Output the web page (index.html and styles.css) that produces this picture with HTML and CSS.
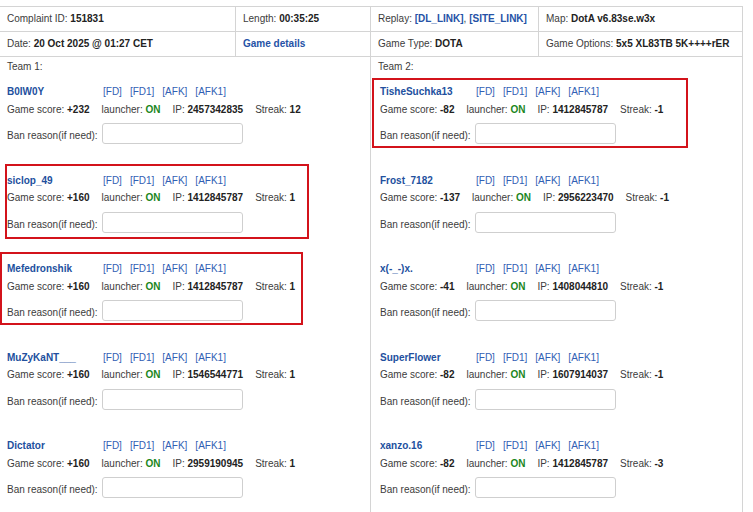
FILE: index.html
```html
<!DOCTYPE html>
<html lang="en">
<head>
    <meta charset="UTF-8">
    <title>Complaint 151831</title>
    <link rel="stylesheet" href="styles.css">
</head>
<body>
<div class="page">
    <table class="info">
        <colgroup>
            <col class="c1"><col class="c2"><col class="c3"><col class="c4">
        </colgroup>
        <tr>
            <td>Complaint ID: <b>151831</b></td>
            <td>Length: <b>00:35:25</b></td>
            <td>Replay: <a href="#" class="strong">[DL_LINK]</a>, <a href="#" class="strong">[SITE_LINK]</a></td>
            <td>Map: <b>DotA v6.83se.w3x</b></td>
        </tr>
        <tr>
            <td>Date: <b>20 Oct 2025 @ 01:27 CET</b></td>
            <td><a href="#" class="strong">Game details</a></td>
            <td>Game Type: <b>DOTA</b></td>
            <td>Game Options: <b>5x5 XL83TB 5K++++rER</b></td>
        </tr>
        <tr class="teams">
            <td colspan="2" class="team team-1">
                <div class="team-label">Team 1:</div>

                <div class="player">
                    <div class="name-line"><a href="#" class="name">B0IW0Y</a><span class="acts"><a href="#">[FD]</a><a href="#">[FD1]</a><a href="#">[AFK]</a><a href="#">[AFK1]</a></span></div>
                    <div class="stats"><span>Game score: <b>+232</b></span><span>launcher: <b class="on">ON</b></span><span>IP: <b>2457342835</b></span><span>Streak: <b>12</b></span></div>
                    <div class="ban"><label>Ban reason(if need):</label><input type="text"></div>
                </div>

                <div class="player">
                    <div class="name-line"><a href="#" class="name">siclop_49</a><span class="acts"><a href="#">[FD]</a><a href="#">[FD1]</a><a href="#">[AFK]</a><a href="#">[AFK1]</a></span></div>
                    <div class="stats"><span>Game score: <b>+160</b></span><span>launcher: <b class="on">ON</b></span><span>IP: <b>1412845787</b></span><span>Streak: <b>1</b></span></div>
                    <div class="ban"><label>Ban reason(if need):</label><input type="text"></div>
                </div>

                <div class="player">
                    <div class="name-line"><a href="#" class="name">Mefedronshik</a><span class="acts"><a href="#">[FD]</a><a href="#">[FD1]</a><a href="#">[AFK]</a><a href="#">[AFK1]</a></span></div>
                    <div class="stats"><span>Game score: <b>+160</b></span><span>launcher: <b class="on">ON</b></span><span>IP: <b>1412845787</b></span><span>Streak: <b>1</b></span></div>
                    <div class="ban"><label>Ban reason(if need):</label><input type="text"></div>
                </div>

                <div class="player">
                    <div class="name-line"><a href="#" class="name">MuZyKaNT___</a><span class="acts"><a href="#">[FD]</a><a href="#">[FD1]</a><a href="#">[AFK]</a><a href="#">[AFK1]</a></span></div>
                    <div class="stats"><span>Game score: <b>+160</b></span><span>launcher: <b class="on">ON</b></span><span>IP: <b>1546544771</b></span><span>Streak: <b>1</b></span></div>
                    <div class="ban"><label>Ban reason(if need):</label><input type="text"></div>
                </div>

                <div class="player">
                    <div class="name-line"><a href="#" class="name">Dictator</a><span class="acts"><a href="#">[FD]</a><a href="#">[FD1]</a><a href="#">[AFK]</a><a href="#">[AFK1]</a></span></div>
                    <div class="stats"><span>Game score: <b>+160</b></span><span>launcher: <b class="on">ON</b></span><span>IP: <b>2959190945</b></span><span>Streak: <b>1</b></span></div>
                    <div class="ban"><label>Ban reason(if need):</label><input type="text"></div>
                </div>
            </td>
            <td colspan="2" class="team team-2">
                <div class="team-label">Team 2:</div>

                <div class="player">
                    <div class="name-line"><a href="#" class="name">TisheSuchka13</a><span class="acts"><a href="#">[FD]</a><a href="#">[FD1]</a><a href="#">[AFK]</a><a href="#">[AFK1]</a></span></div>
                    <div class="stats"><span>Game score: <b>-82</b></span><span>launcher: <b class="on">ON</b></span><span>IP: <b>1412845787</b></span><span>Streak: <b>-1</b></span></div>
                    <div class="ban"><label>Ban reason(if need):</label><input type="text"></div>
                </div>

                <div class="player">
                    <div class="name-line"><a href="#" class="name">Frost_7182</a><span class="acts"><a href="#">[FD]</a><a href="#">[FD1]</a><a href="#">[AFK]</a><a href="#">[AFK1]</a></span></div>
                    <div class="stats"><span>Game score: <b>-137</b></span><span>launcher: <b class="on">ON</b></span><span>IP: <b>2956223470</b></span><span>Streak: <b>-1</b></span></div>
                    <div class="ban"><label>Ban reason(if need):</label><input type="text"></div>
                </div>

                <div class="player">
                    <div class="name-line"><a href="#" class="name">x(-_-)x.</a><span class="acts"><a href="#">[FD]</a><a href="#">[FD1]</a><a href="#">[AFK]</a><a href="#">[AFK1]</a></span></div>
                    <div class="stats"><span>Game score: <b>-41</b></span><span>launcher: <b class="on">ON</b></span><span>IP: <b>1408044810</b></span><span>Streak: <b>-1</b></span></div>
                    <div class="ban"><label>Ban reason(if need):</label><input type="text"></div>
                </div>

                <div class="player">
                    <div class="name-line"><a href="#" class="name">SuperFlower</a><span class="acts"><a href="#">[FD]</a><a href="#">[FD1]</a><a href="#">[AFK]</a><a href="#">[AFK1]</a></span></div>
                    <div class="stats"><span>Game score: <b>-82</b></span><span>launcher: <b class="on">ON</b></span><span>IP: <b>1607914037</b></span><span>Streak: <b>-1</b></span></div>
                    <div class="ban"><label>Ban reason(if need):</label><input type="text"></div>
                </div>

                <div class="player">
                    <div class="name-line"><a href="#" class="name">xanzo.16</a><span class="acts"><a href="#">[FD]</a><a href="#">[FD1]</a><a href="#">[AFK]</a><a href="#">[AFK1]</a></span></div>
                    <div class="stats"><span>Game score: <b>-82</b></span><span>launcher: <b class="on">ON</b></span><span>IP: <b>1412845787</b></span><span>Streak: <b>-3</b></span></div>
                    <div class="ban"><label>Ban reason(if need):</label><input type="text"></div>
                </div>
            </td>
        </tr>
    </table>

    <!-- red marks drawn over the screenshot -->
    <div class="mark mark-t2"></div>
    <div class="mark mark-siclop"></div>
    <div class="mark mark-mefed"></div>
</div>
</body>
</html>
```

FILE: styles.css
```css
body {
    margin: 0;
    font-family: "Liberation Sans", Arial, sans-serif;
    font-size: 10px;
    color: #3c3c3c;
    background-color: #fff;
}
.page {
    position: relative;
    padding-top: 6px;
}
a {
    color: #3060b4;
    text-decoration: none;
}
b {
    color: #222;
}
a.strong {
    font-weight: bold;
    color: #2552a6;
}
.info {
    border-collapse: collapse;
    table-layout: fixed;
    width: 743px;
    margin-left: -1px;
}
.c1 { width: 236px; }
.c2 { width: 135px; }
.c3 { width: 168px; }
.c4 { width: 204px; }
.info td {
    border: 1px solid #d4d4d4;
    padding: 6px 7px;
    line-height: 12px;
    vertical-align: top;
    white-space: nowrap;
}
.info td.team {
    padding: 4px 7px 0 7px;
}
.team-label {
    line-height: 12px;
    margin-bottom: 13px;
}
.player {
    height: 88.5px;
}
.team-2 .player {
    padding-left: 2px;
}
.name-line {
    display: flex;
    line-height: 12px;
    margin-bottom: 5.5px;
}
.name {
    width: 96px;
    font-weight: bold;
    color: #22509e;
}
.acts {
    display: flex;
    gap: 8px;
}
.stats {
    display: flex;
    gap: 12px;
    line-height: 12px;
}
.on {
    color: #1c861c;
}
.ban {
    display: flex;
    align-items: flex-end;
    margin-top: 7.5px;
}
.ban label {
    line-height: 12px;
    padding-bottom: 2px;
}
.ban input {
    width: 141px;
    height: 21px;
    box-sizing: border-box;
    margin: 0 0 0 4px;
    border: 1px solid #cfcfcf;
    border-radius: 3px;
    background-color: #fff;
}
.mark {
    position: absolute;
    border: 2px solid #d3131b;
    box-sizing: border-box;
}
.mark-t2 {
    left: 372px;
    top: 78px;
    width: 316px;
    height: 70px;
}
.mark-siclop {
    left: 5px;
    top: 164px;
    width: 304px;
    height: 75px;
}
.mark-mefed {
    left: 0;
    top: 252px;
    width: 303px;
    height: 73px;
}
```
